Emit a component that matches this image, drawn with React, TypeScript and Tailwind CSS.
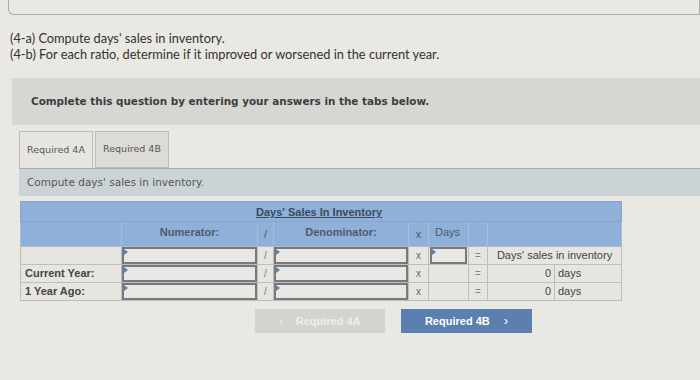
import React from "react";

function Input({ className = "" }: { className?: string }) {
  return (
    <div className={"relative h-[17px] border-2 border-[#77797c] bg-[#e8e7e3] " + className}>
      <span className="absolute left-0 top-0 w-0 h-0 border-y-[3px] border-y-transparent border-l-[4px] border-l-[#5b7fa8]" />
    </div>
  );
}

const cell = "border border-[#bdbdbb] p-0 h-[18px]";

function Row({ label, value }: { label?: string; value?: boolean }) {
  return (
    <tr>
      <td className={cell + " px-1 font-bold text-[#444] text-[11px]"}>{label}</td>
      <td className={cell}>
        <Input />
      </td>
      <td className={cell + " text-center text-[10px] text-[#777]"}>/</td>
      <td className={cell}>
        <Input />
      </td>
      <td className={cell + " text-center text-[10px] text-[#666]"}>x</td>
      <td className={cell}>{!label && <Input className="mx-[1px]" />}</td>
      <td className={cell + " text-center text-[10px] text-[#888]"}>=</td>
      {value ? (
        <>
          <td className={cell + " text-right pr-[3px] text-[11px] text-[#444]"}>0</td>
          <td className={cell + " pl-[3px] text-[11px] text-[#444]"}>days</td>
        </>
      ) : (
        <td colSpan={2} className={cell + " text-center text-[11px] text-[#444]"}>
          Days' sales in inventory
        </td>
      )}
    </tr>
  );
}

export default function App() {
  return (
    <div className="w-[700px] h-[380px] overflow-hidden bg-[#e9e8e3] text-[#3a3a3a]">
      <div className="ml-2 h-[15px] border border-t-0 border-[#a9a9a6] rounded-bl-md" />

      <div className="mt-[16px] pl-[10px] font-['Lato',sans-serif] text-[12.8px] leading-[15.5px] text-[#333]">
        <p>(4-a) Compute days' sales in inventory.</p>
        <p>(4-b) For each ratio, determine if it improved or worsened in the current year.</p>
      </div>

      <div className="mt-[16px] ml-3 h-[47px] bg-[#d6d6d2] flex items-center pl-[19px]">
        <p className="font-['DejaVu_Sans',sans-serif] font-bold text-[10.4px] text-[#3d3d3d]">
          Complete this question by entering your answers in the tabs below.
        </p>
      </div>

      <div className="mt-[6px] ml-[19px] font-['DejaVu_Sans',sans-serif]">
        <div className="flex items-end h-[37px]">
          <div className="h-[37px] w-[74px] border border-b-0 border-[#bcbcb9] bg-[#e6e5e1] flex items-center justify-center text-[9.5px] text-[#555]">
            Required 4A
          </div>
          <div className="ml-[2px] h-[37px] w-[74px] border border-[#bcbcb9] bg-[#dcdbd7] flex items-center justify-center text-[9.5px] text-[#555]">
            Required 4B
          </div>
        </div>
        <div className="h-[28px] bg-[#ccd3d6] border-t border-[#a7adb0] flex items-center pl-[8px] text-[10.5px] text-[#555]">
          Compute days' sales in inventory.
        </div>
      </div>

      <div className="mt-[5px] ml-[20px] font-['Liberation_Sans',sans-serif]">
        <table className="table-fixed border-collapse w-[601px] bg-[#e6e5e0]">
          <colgroup>
            <col className="w-[101px]" />
            <col className="w-[136px]" />
            <col className="w-[16px]" />
            <col className="w-[135px]" />
            <col className="w-[20px]" />
            <col className="w-[40px]" />
            <col className="w-[19px]" />
            <col className="w-[67px]" />
            <col className="w-[67px]" />
          </colgroup>
          <thead>
            <tr className="h-[20px] bg-[#8fb1d9]">
              <th colSpan={9} className="border border-[#86a6cc] p-0 pt-[1px] font-bold text-[11px] text-[#3c4a5c] text-center">
                <span className="underline ml-[-4px]">Days' Sales In Inventory</span>
              </th>
            </tr>
            <tr className="h-[25px] bg-[#8fb1d9] text-[11px] font-bold text-[#4d5a6a]">
              <th className="border border-[#a9bdd6] p-0"></th>
              <th className="border border-[#a9bdd6] p-0 pb-[3px]">Numerator:</th>
              <th className="border border-[#a9bdd6] p-0 font-normal text-[#555]">/</th>
              <th className="border border-[#a9bdd6] p-0 pb-[3px]">Denominator:</th>
              <th className="border border-[#a9bdd6] p-0 font-normal text-[#555]">x</th>
              <th className="border border-[#a9bdd6] p-0 pb-[3px] text-left pl-[6px] font-normal">Days</th>
              <th className="border border-[#a9bdd6] p-0"></th>
              <th colSpan={2} className="border border-[#a9bdd6] p-0"></th>
            </tr>
          </thead>
          <tbody>
            <Row />
            <Row label="Current Year:" value />
            <Row label="1 Year Ago:" value />
          </tbody>
        </table>
      </div>

      <div className="mt-[8px] flex font-['Liberation_Sans',sans-serif] text-[11px] font-bold">
        <div className="ml-[255px] w-[130px] h-[24px] bg-[#d3d3d1] text-[#eeeeec] flex items-center justify-center gap-[12px]">
          <span className="font-normal text-[13px]">&lsaquo;</span>
          <span>Required 4A</span>
        </div>
        <div className="ml-[16px] w-[131px] h-[24px] bg-[#5b7fae] text-white flex items-center justify-center gap-[14px]">
          <span>Required 4B</span>
          <span className="font-normal text-[13px]">&rsaquo;</span>
        </div>
      </div>
    </div>
  );
}
